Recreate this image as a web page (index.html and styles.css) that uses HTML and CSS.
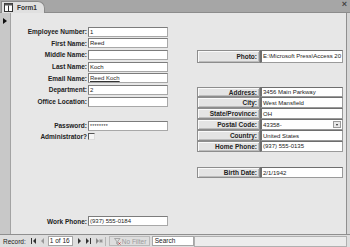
FILE: index.html
```html
<!DOCTYPE html>
<html lang="en">
<head>
  <meta charset="UTF-8">
  <title>Form1</title>
  <link rel="stylesheet" href="styles.css">
</head>
<body>
<div class="window">
  <div class="tabbar">
    <div class="tab">
      <svg class="tab-icon" width="9" height="9" viewBox="0 0 9 9">
        <rect x="0.5" y="0.5" width="8" height="8" fill="#fff" stroke="#333"/>
        <rect x="0.5" y="0.5" width="8" height="2" fill="#555"/>
        <line x1="4.5" y1="2.5" x2="4.5" y2="8.5" stroke="#333"/>
      </svg>
      <span>Form1</span>
    </div>
    <span class="close">&#215;</span>
  </div>

  <div class="body">
    <div class="selector"><span class="arrow"></span></div>
    <div class="form">
      <div class="col-left">
        <div class="field"><span class="lbl">Employee Number:</span><span class="box">1</span></div>
        <div class="field"><span class="lbl">First Name:</span><span class="box">Reed</span></div>
        <div class="field"><span class="lbl">Middle Name:</span><span class="box"></span></div>
        <div class="field"><span class="lbl">Last Name:</span><span class="box">Koch</span></div>
        <div class="field"><span class="lbl">Email Name:</span><span class="box link">Reed Koch</span></div>
        <div class="field"><span class="lbl">Department:</span><span class="box">2</span></div>
        <div class="field"><span class="lbl">Office Location:</span><span class="box"></span></div>

        <div class="field pw"><span class="lbl">Password:</span><span class="box stars">********</span></div>
        <div class="field check"><span class="lbl">Administrator?</span><span class="checkbox"></span></div>

        <div class="field work"><span class="lbl">Work Phone:</span><span class="box">(937) 555-0184</span></div>
      </div>

      <div class="col-right">
        <div class="rrow photo"><span class="rlbl">Photo:</span><span class="rbox">E:\Microsoft Press\Access 20</span></div>

        <div class="group">
          <div class="rrow"><span class="rlbl">Address:</span><span class="rbox">3456 Main Parkway</span></div>
          <div class="rrow"><span class="rlbl">City:</span><span class="rbox">West Mansfield</span></div>
          <div class="rrow"><span class="rlbl">State/Province:</span><span class="rbox">OH</span></div>
          <div class="rrow"><span class="rlbl">Postal Code:</span><span class="rbox combo">43358-<span class="drop"></span></span></div>
          <div class="rrow"><span class="rlbl">Country:</span><span class="rbox">United States</span></div>
          <div class="rrow"><span class="rlbl">Home Phone:</span><span class="rbox">(937) 555-0135</span></div>
        </div>

        <div class="rrow birth"><span class="rlbl">Birth Date:</span><span class="rbox">2/1/1942</span></div>
      </div>
    </div>
  </div>

  <div class="navbar">
    <span class="nav-label">Record:</span>
    <svg class="nav-btn" width="6" height="6" viewBox="0 0 6 6"><rect x="0" y="0" width="1" height="6" fill="#333"/><path d="M5 0 L2 3 L5 6 Z" fill="#333"/></svg>
    <svg class="nav-btn dim" width="4" height="6" viewBox="0 0 4 6"><path d="M3 0 L0 3 L3 6 Z" fill="#999"/></svg>
    <span class="rec-box">1 of 16</span>
    <svg class="nav-btn" width="4" height="6" viewBox="0 0 4 6"><path d="M0 0 L3 3 L0 6 Z" fill="#333"/></svg>
    <svg class="nav-btn" width="6" height="6" viewBox="0 0 6 6"><path d="M0 0 L3 3 L0 6 Z" fill="#333"/><rect x="4" y="0" width="1" height="6" fill="#333"/></svg>
    <svg class="nav-btn dim" width="7" height="6" viewBox="0 0 7 6"><path d="M0 0 L3 3 L0 6 Z" fill="#888"/><path d="M5 1 v4 M3 3 h4 M3.6 1.6 l2.8 2.8 M6.4 1.6 l-2.8 2.8" stroke="#888" stroke-width="0.7"/></svg>
    <span class="sep"></span>
    <span class="filter">
      <svg width="7" height="7" viewBox="0 0 7 7"><path d="M0.5 0.5 H6 L3.8 3.3 V6.5 L2.7 5.8 V3.3 Z" fill="none" stroke="#999" stroke-width="0.8"/><path d="M4.5 4.5 l2 2 M6.5 4.5 l-2 2" stroke="#b33" stroke-width="0.8"/></svg>
      No Filter
    </span>
    <span class="search">Search</span>
    <span class="hscroll"></span>
  </div>
</div>
</body>
</html>
```

FILE: styles.css
```css
* { box-sizing: border-box; }
body { margin: 0; background: #d6d6d6; font-family: 'Liberation Sans', Arial, sans-serif; color: #222; }
.window { width: 350px; height: 247px; display: flex; flex-direction: column; overflow: hidden; }

/* document tab strip */
.tabbar { height: 13px; background: #a6a6a6; display: flex; align-items: flex-end; justify-content: space-between; border-bottom: 1px solid #8c8c8c; }
.tab { height: 12px; width: 44px; margin-left: 1px; background: #e0e0e0; border: 1px solid #8a8a8a; border-bottom: none; border-top-right-radius: 7px; display: flex; align-items: center; gap: 4px; padding-left: 2px; margin-bottom: -1px; }
.tab span { font-size: 6.5px; font-weight: bold; color: #333; }
.tab-icon { display: block; }
.close { font-size: 9px; line-height: 9px; color: #444; margin: 0 3px 3px 0; font-weight: bold; }

/* form body */
.body { flex: 1; display: flex; background: #d6d6d6; }
.selector { width: 11px; background: #c8c8c8; border-right: 1px solid #a3a3a3; padding: 5px 0 0 3px; }
.arrow { display: block; width: 0; height: 0; border-left: 4px solid #111; border-top: 3px solid transparent; border-bottom: 3px solid transparent; }
.form { flex: 1; background: #e7e7e7; border-right: 1px solid #8f8f8f; margin-right: 3px; display: flex; }

.col-left { width: 157px; padding-top: 13.7px; display: flex; flex-direction: column; gap: 1.65px; }
.field { display: flex; align-items: center; height: 10px; gap: 1px; }
.lbl { width: 76px; text-align: right; font-size: 6.5px; font-weight: bold; color: #222; white-space: nowrap; }
.box { width: 80px; height: 10px; background: #fff; border: 1px solid #a8a8a8; border-top-color: #7c7c7c; border-left-color: #7c7c7c; font-size: 6px; line-height: 8px; padding-left: 1px; overflow: hidden; white-space: nowrap; }
.box.link { text-decoration: underline; color: #333; }
.box.stars { font-size: 5px; letter-spacing: 0.3px; }
.field.pw { margin-top: 12.8px; }
.field.check { height: 8px; }
.checkbox { width: 7px; height: 7px; background: #f4f4f4; border: 1px solid #dcdcdc; border-top-color: #555; border-left-color: #555; }
.field.work { margin-top: 74px; }

.col-right { width: 146px; margin-left: 29px; padding-top: 37px; display: flex; flex-direction: column; }
.rrow { display: flex; height: 10.9px; }
.rrow.photo { height: 12.6px; }
.group { margin-top: 24px; }
.rrow.birth { margin-top: 15px; height: 11.5px; }
.rlbl { width: 63px; border: 1px solid #8d8d8d; box-shadow: inset 1px 1px 0 #fafafa, inset -1px -1px 0 #bdbdbd; background: #e4e4e4; text-align: right; font-size: 6.5px; font-weight: bold; color: #222; padding: 0 2px; display: flex; align-items: center; justify-content: flex-end; white-space: nowrap; }
.rbox { flex: 1; background: #fff; border: 1px solid #9a9a9a; border-left: 2px solid #6e6e6e; border-top-color: #6e6e6e; font-size: 6px; padding-left: 1px; display: flex; align-items: center; overflow: hidden; white-space: nowrap; }
.rbox.combo { position: relative; }
.drop { position: absolute; right: 1px; top: 1px; width: 8px; height: 7px; background: #e8e8e8; border: 1px solid #9a9a9a; }
.drop::after { content: ""; position: absolute; left: 2px; top: 2px; border-top: 2px solid #222; border-left: 1.5px solid transparent; border-right: 1.5px solid transparent; }

/* record navigation bar */
.navbar { height: 13px; background: #dedede; border-top: 1px solid #8f8f8f; display: flex; align-items: center; font-size: 6.5px; color: #222; }
.nav-label { margin-left: 3px; margin-right: 5px; }
.nav-btn { display: block; margin-right: 4px; }
.rec-box { width: 25px; height: 10px; background: #fff; border: 1px solid #a6a6a6; line-height: 8px; padding-left: 1px; margin-left: -1px; margin-right: 5px; }
.sep { width: 1px; height: 9px; background: #b5b5b5; margin: 0 3px 0 -2px; }
.filter { width: 41px; height: 10px; border: 1px solid #b9b9b9; color: #9a9a9a; display: flex; align-items: center; gap: 1px; padding-left: 4px; margin-right: 2px; }
.filter svg { display: block; }
.search { width: 42px; height: 10px; background: #fff; border: 1px solid #a6a6a6; line-height: 8px; padding-left: 2px; }
.hscroll { flex: 1; height: 11px; background: #ececec; border: 1px solid #b0b0b0; margin-right: 3px; }
```
